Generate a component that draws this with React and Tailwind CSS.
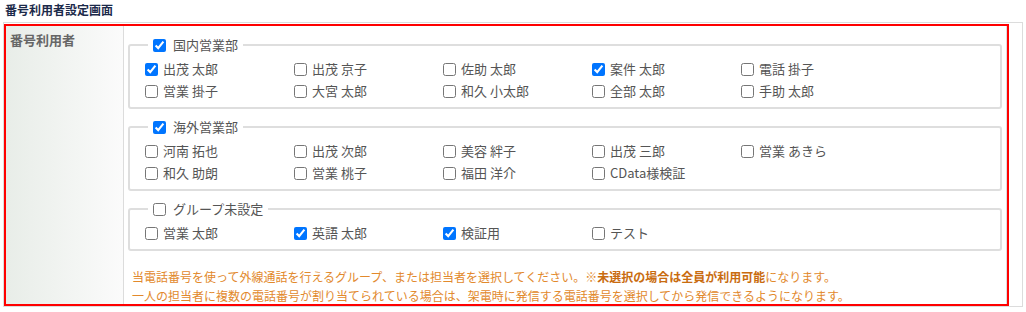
import React from "react";

const groups = [
  {
    name: "国内営業部",
    checked: true,
    items: [
      ["出茂 太郎", true],
      ["出茂 京子", false],
      ["佐助 太郎", false],
      ["案件 太郎", true],
      ["電話 掛子", false],
      ["営業 掛子", false],
      ["大宮 太郎", false],
      ["和久 小太郎", false],
      ["全部 太郎", false],
      ["手助 太郎", false],
    ],
  },
  {
    name: "海外営業部",
    checked: true,
    items: [
      ["河南 拓也", false],
      ["出茂 次郎", false],
      ["美容 絆子", false],
      ["出茂 三郎", false],
      ["営業 あきら", false],
      ["和久 助朗", false],
      ["営業 桃子", false],
      ["福田 洋介", false],
      ["CData様検証", false],
    ],
  },
  {
    name: "グループ未設定",
    checked: false,
    items: [
      ["営業 太郎", false],
      ["英語 太郎", true],
      ["検証用", true],
      ["テスト", false],
    ],
  },
];

function Check({ checked }) {
  return (
    <input
      type="checkbox"
      defaultChecked={checked}
      className="m-0 h-[13px] w-[13px] shrink-0"
    />
  );
}

function Group({ g, first }) {
  return (
    <fieldset
      className={`${first ? "" : "mt-[9px]"} border-2 border-[#dedede] rounded-[3px] pl-[15px] pr-2 pb-[5px]`}
    >
      <legend className="ml-[3px] px-[5px] flex items-center h-[18px]">
        <Check checked={g.checked} />
        <span className="ml-[7px] text-[13px] leading-[18px] text-[#555]">
          {g.name}
        </span>
      </legend>
      <div className="grid grid-cols-[repeat(5,149px)] pt-[4px]">
        {g.items.map(([n, c]) => (
          <label key={n} className="flex items-center h-[22px]">
            <Check checked={c} />
            <span className="ml-[5px] text-[13px] leading-[18px] text-[#555] whitespace-nowrap">
              {n}
            </span>
          </label>
        ))}
      </div>
    </fieldset>
  );
}

export default function App() {
  return (
    <div
      className="w-[1026px] h-[312px] bg-white"
      style={{ fontFamily: '"Noto Sans CJK JP", "Noto Sans", sans-serif' }}
    >
      <div className="pl-[5px] h-[22px] pt-[2px] text-[12px] leading-[16px] font-bold text-[#1c2a4a]">
        番号利用者設定画面
      </div>
      <div className="ml-[3px] w-[1020px] h-[285px] border border-[#dcdcdc] pt-[1px]">
        <div className="flex w-[1005px] h-[282px] border-2 border-[#ff0000]">
          <div className="w-[118px] shrink-0 border-r border-[#dcdcdc] bg-gradient-to-r from-[#e8ede8] to-[#fbfbfb] pl-[4px] pt-0">
            <span className="text-[13px] leading-[18px] font-bold text-[#666]">
              番号利用者
            </span>
          </div>
          <div className="flex-1 border-r border-[#dcdcdc] pl-[4px] pr-[4px] pt-[10px]">
            {groups.map((g, i) => (
              <Group key={g.name} g={g} first={i === 0} />
            ))}
            <div className="mt-[16px] pl-[4px] text-[12px] leading-[19px] text-[#e2892c] whitespace-nowrap">
              <div>
                当電話番号を使って外線通話を行えるグループ、または担当者を選択してください。※
                <b className="font-bold text-[#c96c10]">未選択の場合は全員が利用可能</b>
                になります。
              </div>
              <div>
                一人の担当者に複数の電話番号が割り当てられている場合は、架電時に発信する電話番号を選択してから発信できるようになります。
              </div>
            </div>
          </div>
        </div>
      </div>
    </div>
  );
}
